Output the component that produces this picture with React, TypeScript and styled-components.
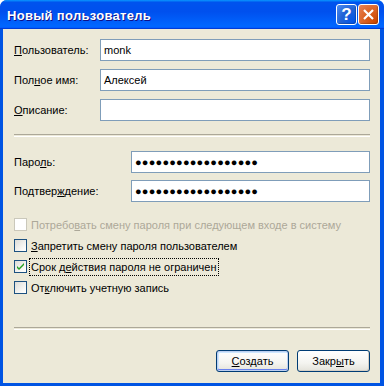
import styled, { createGlobalStyle } from 'styled-components';

const Global = createGlobalStyle`
  html, body {
    margin: 0;
    padding: 0;
    background: #fff;
  }
  body {
    font-family: Tahoma, "Liberation Sans", Arial, sans-serif;
    font-size: 11px;
    color: #000;
  }
`;

const Window = styled.div`
  width: 384px;
  height: 386px;
  display: flex;
  flex-direction: column;
  box-sizing: border-box;
  border-radius: 7px 7px 0 0;
  overflow: hidden;
  background: #0054e3;
`;

const TitleBar = styled.div`
  height: 29px;
  flex: none;
  display: flex;
  align-items: center;
  padding: 0 5px 0 7px;
  box-sizing: border-box;
  background: linear-gradient(
    180deg,
    #0997ff 0%,
    #0053ee 8%,
    #0050ee 40%,
    #0066ff 88%,
    #0066ff 93%,
    #005bff 95%,
    #003dd7 96%,
    #003dd7 100%
  );
`;

const Title = styled.div`
  flex: 1;
  color: #fff;
  font-family: "Liberation Sans", Arial, sans-serif;
  font-weight: bold;
  font-size: 13px;
  letter-spacing: 0.3px;
  text-shadow: 1px 1px #0f1089;
  padding-top: 1px;
`;

const CaptionButton = styled.div<{ $close?: boolean }>`
  width: 21px;
  height: 21px;
  box-sizing: border-box;
  border: 1px solid #fff;
  border-radius: 3px;
  margin-left: 1px;
  display: flex;
  align-items: center;
  justify-content: center;
  color: #fff;
  font-family: "Liberation Sans", Arial, sans-serif;
  font-weight: bold;
  font-size: 17px;
  background: ${(p) =>
    p.$close
      ? 'radial-gradient(circle at 90% 90%, #cc4600 0%, #dc6527 55%, #e8845a 100%)'
      : 'radial-gradient(circle at 90% 90%, #0054e9 0%, #2263d5 55%, #4f8ef4 100%)'};
  box-shadow: inset -1px -1px 1px rgba(0, 0, 0, 0.2);
`;

const Client = styled.div`
  flex: 1;
  margin: 0 4px 3px 3px;
  background: #ece9d8;
  padding: 10px 10px 11px 11px;
  display: flex;
  flex-direction: column;
`;

const FieldGroup = styled.div<{ $gap: number }>`
  display: flex;
  flex-direction: column;
  gap: ${(p) => p.$gap}px;
`;

const FieldRow = styled.div<{ $label: number }>`
  display: grid;
  grid-template-columns: ${(p) => p.$label}px 1fr;
  align-items: center;
`;

const Label = styled.label`
  white-space: nowrap;
`;

const Input = styled.div<{ $dots?: boolean }>`
  height: 22px;
  box-sizing: border-box;
  border: 1px solid #7f9db9;
  background: #fff;
  padding: 0 3px;
  display: flex;
  align-items: center;
  font-size: ${(p) => (p.$dots ? '11px' : '11px')};
  letter-spacing: ${(p) => (p.$dots ? '0.2px' : '0')};
`;

const Separator = styled.div<{ $top: number; $bottom: number }>`
  height: 1px;
  border-top: 1px solid #aca899;
  border-bottom: 1px solid #fff;
  margin: ${(p) => p.$top}px 0 ${(p) => p.$bottom}px;
`;

const CheckList = styled.div`
  display: flex;
  flex-direction: column;
  margin-top: 12px;
`;

const CheckRow = styled.div<{ $disabled?: boolean }>`
  height: 21px;
  display: flex;
  align-items: center;
  color: ${(p) => (p.$disabled ? '#aca899' : '#000')};
`;

const Box = styled.span<{ $disabled?: boolean }>`
  width: 13px;
  height: 13px;
  box-sizing: border-box;
  flex: none;
  border: 1px solid ${(p) => (p.$disabled ? '#cac8bb' : '#1c5180')};
  background: ${(p) =>
    p.$disabled ? '#fff' : 'linear-gradient(135deg, #dcdcd7 0%, #fbfbf9 80%, #fff 100%)'};
  display: flex;
  align-items: center;
  justify-content: center;
  margin-right: 3px;
`;

const CheckText = styled.span<{ $focus?: boolean }>`
  padding: 1px 1px;
  outline: ${(p) => (p.$focus ? '1px dotted #000' : 'none')};
  line-height: 14px;
`;

const Key = styled.u`
  text-decoration: underline;
  text-underline-offset: 1px;
`;

const Buttons = styled.div`
  margin-top: auto;
  display: flex;
  justify-content: flex-end;
  gap: 8px;
`;

const Button = styled.div<{ $default?: boolean }>`
  width: 73px;
  height: 22px;
  box-sizing: border-box;
  border: 1px solid #003c74;
  border-radius: 3px;
  display: flex;
  align-items: center;
  justify-content: center;
  background: linear-gradient(180deg, #ffffff 0%, #f4f4f0 60%, #e3e2da 100%);
  box-shadow: ${(p) =>
    p.$default
      ? 'inset 0 0 0 1px #bccff0, inset 0 -1px 0 1px #6982ee, inset 1px 1px 0 1px #cee7ff'
      : 'inset -1px -1px 0 #d6d0c5'};
`;

function Check() {
  return (
    <svg width="9" height="9" viewBox="0 0 9 9">
      <path d="M1 4 L3 6 L8 1 L8 3 L3 8 L1 6 Z" fill="#21a121" />
    </svg>
  );
}

function CloseGlyph() {
  return (
    <svg width="13" height="13" viewBox="0 0 13 13">
      <path d="M2 2 L11 11 M11 2 L2 11" stroke="#fff" strokeWidth="2.2" />
    </svg>
  );
}

const dots = '●●●●●●●●●●●●●●●●●●';

export default function App() {
  return (
    <>
      <Global />
      <Window>
        <TitleBar>
          <Title>Новый пользователь</Title>
          <CaptionButton>?</CaptionButton>
          <CaptionButton $close>
            <CloseGlyph />
          </CaptionButton>
        </TitleBar>
        <Client>
          <FieldGroup $gap={8}>
            <FieldRow $label={86}>
              <Label>
                <Key>П</Key>ользователь:
              </Label>
              <Input>monk</Input>
            </FieldRow>
            <FieldRow $label={86}>
              <Label>
                Пол<Key>н</Key>ое имя:
              </Label>
              <Input>Алексей</Input>
            </FieldRow>
            <FieldRow $label={86}>
              <Label>
                <Key>О</Key>писание:
              </Label>
              <Input />
            </FieldRow>
          </FieldGroup>
          <Separator $top={13} $bottom={14} />
          <FieldGroup $gap={7}>
            <FieldRow $label={117}>
              <Label>
                Паро<Key>л</Key>ь:
              </Label>
              <Input $dots>{dots}</Input>
            </FieldRow>
            <FieldRow $label={117}>
              <Label>
                Подтвер<Key>ж</Key>дение:
              </Label>
              <Input $dots>{dots}</Input>
            </FieldRow>
          </FieldGroup>
          <CheckList>
            <CheckRow $disabled>
              <Box $disabled />
              <CheckText>
                Потребо<Key>в</Key>ать смену пароля при следующем входе в систему
              </CheckText>
            </CheckRow>
            <CheckRow>
              <Box />
              <CheckText>
                <Key>З</Key>апретить смену пароля пользователем
              </CheckText>
            </CheckRow>
            <CheckRow>
              <Box>
                <Check />
              </Box>
              <CheckText $focus>
                Срок д<Key>е</Key>йствия пароля не ограничен
              </CheckText>
            </CheckRow>
            <CheckRow>
              <Box />
              <CheckText>
                От<Key>к</Key>лючить учетную запись
              </CheckText>
            </CheckRow>
          </CheckList>
          <Separator $top={29} $bottom={0} />
          <Buttons>
            <Button $default>
              <span>
                <Key>С</Key>оздать
              </span>
            </Button>
            <Button>
              <span>
                Закр<Key>ы</Key>ть
              </span>
            </Button>
          </Buttons>
        </Client>
      </Window>
    </>
  );
}
